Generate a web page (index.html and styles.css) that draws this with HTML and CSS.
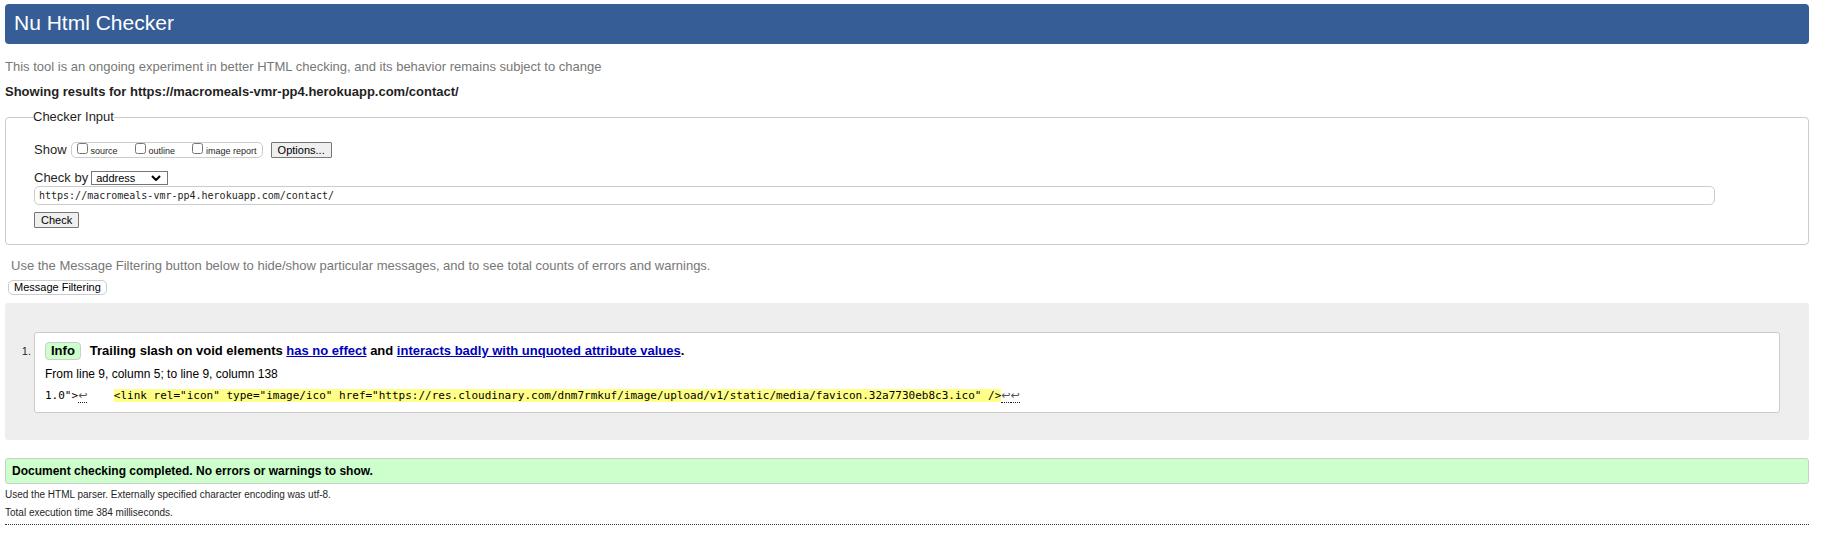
FILE: index.html
```html
<!DOCTYPE html>
<html lang="en">
<head>
<meta charset="utf-8">
<title>Nu Html Checker</title>
<link rel="stylesheet" href="styles.css">
</head>
<body>
<header class="banner"><h1>Nu Html Checker</h1></header>
<p class="note">This tool is an ongoing experiment in better HTML checking, and its behavior remains subject to change</p>
<h2 class="target">Showing results for https://macromeals-vmr-pp4.herokuapp.com/contact/</h2>
<form>
  <fieldset class="checker">
    <legend>Checker Input</legend>
    <div class="show-row">
      <span>Show</span>
      <div class="checks">
        <label><input type="checkbox">source</label>
        <label><input type="checkbox">outline</label>
        <label><input type="checkbox">image report</label>
      </div>
      <button type="button" class="btn options">Options...</button>
    </div>
    <div class="by-row">
      <label for="method">Check by</label>
      <div class="select-box">
        <select id="method"><option>address</option></select>
        <svg class="chevron" viewBox="0 0 10 6" aria-hidden="true"><path d="M1 1l4 4 4-4"/></svg>
      </div>
    </div>
    <input class="url" type="text" aria-label="Address" value="https://macromeals-vmr-pp4.herokuapp.com/contact/">
    <button type="button" class="btn">Check</button>
  </fieldset>
</form>
<p class="note hint">Use the Message Filtering button below to hide/show particular messages, and to see total counts of errors and warnings.</p>
<button type="button" class="filter">Message Filtering</button>
<ol class="results">
  <li>
    <p class="message"><strong class="badge">Info</strong><span>Trailing slash on void elements <a href="#effect">has no effect</a> and <a href="#unquoted">interacts badly with unquoted attribute values</a>.</span></p>
    <p class="location">From line 9, column 5; to line 9, column 138</p>
    <p class="extract"><code>1.0"&gt;<span class="lf">↩</span>    <mark>&lt;link rel="icon" type="image/ico" href="https://res.cloudinary.com/dnm7rmkuf/image/upload/v1/static/media/favicon.32a7730eb8c3.ico" /&gt;</mark><span class="lf">↩</span><span class="lf">↩</span></code></p>
  </li>
</ol>
<p class="success">Document checking completed. No errors or warnings to show.</p>
<p class="details">Used the HTML parser. Externally specified character encoding was utf-8.</p>
<p class="details">Total execution time 384 milliseconds.</p>
<hr>
</body>
</html>
```
FILE: styles.css
```css
* { box-sizing: border-box; }
body {
  margin: 4px 20px 0 5px;
  background: #fff;
  color: #1f1f1f;
  font: 13px/18px "Liberation Sans", Arial, sans-serif;
}
h1, h2, p { margin: 0; }
.banner {
  padding: 7px 9px 9px;
  border-radius: 4px;
  background: #365d95;
  color: #fff;
}
h1 { font-size: 21px; font-weight: 400; line-height: 24px; }
.note { margin-top: 14px; color: #777; }
.target { margin-top: 7px; font-size: 13px; line-height: 18px; }
.checker {
  margin: 7px 0 0;
  padding: 15px 93px 16px 28px;
  border: 1px solid #ccc;
  border-radius: 4px;
}
.checker legend { padding: 0; margin-left: -1px; }
.show-row, .by-row { display: flex; align-items: center; }
.show-row { gap: 4px; margin-bottom: 11px; }
.checks {
  display: flex;
  gap: 17px;
  height: 16px;
  padding: 0 5px;
  border: 1px solid #ccc;
  border-radius: 5px;
  font-size: 9px;
  line-height: 16px;
}
.checks label { display: flex; gap: 3px; }
.checks input { width: 11px; height: 11px; margin: 0; }
.btn {
  display: block;
  height: 16px;
  padding: 0 6px;
  border: 1px solid #767676;
  border-radius: 1px;
  background: #efefef;
  color: #000;
  font: 11px/14px "Liberation Sans", Arial, sans-serif;
}
.options { margin-left: 4px; }
.by-row { gap: 3px; line-height: 16px; }
.select-box { position: relative; width: 77px; height: 14px; }
.select-box select {
  display: block;
  width: 100%;
  height: 100%;
  padding: 0 4px;
  appearance: none;
  border: 1px solid #767676;
  border-radius: 0;
  background: #fff;
  color: #000;
  font: 11px/12px "Liberation Sans", Arial, sans-serif;
}
.chevron {
  position: absolute;
  top: 4px;
  right: 7px;
  width: 10px;
  height: 6px;
  fill: none;
  stroke: #000;
  stroke-width: 2;
  pointer-events: none;
}
.url {
  display: block;
  width: 100%;
  height: 19px;
  margin-bottom: 7px;
  padding: 0 4px;
  border: 1px solid #ccc;
  border-radius: 5px;
  color: #1f1f1f;
  font: 10px "DejaVu Sans Mono", monospace;
}
.hint { margin-left: 6px; margin-top: 12px; }
.filter {
  display: block;
  height: 15px;
  margin: 5px 0 8px 3px;
  padding: 0 5px;
  border: 1px solid #ccc;
  border-radius: 5px;
  background: #fff;
  color: #000;
  font: 11px/13px "Liberation Sans", Arial, sans-serif;
}
.results {
  margin: 0;
  padding: 29px 29px 27px;
  border-radius: 3px;
  background: #eee;
  font-size: 11px;
}
.results li {
  padding: 9px 10px 8px;
  border: 1px solid #ccc;
  border-radius: 3px;
  background: #fff;
}
.message { display: flex; align-items: center; gap: 9px; font-size: 13px; font-weight: 700; color: #000; }
.badge {
  padding: 0 5px;
  border: 1px solid #ccc;
  border-radius: 4px;
  background: #cfc;
  line-height: 16px;
}
.message a { color: #00b; }
.location { margin-top: 5px; font-size: 12px; color: #000; }
.extract { margin-top: 3px; line-height: 18px; white-space: pre-wrap; }
.extract code { font: 11px/14px "DejaVu Sans Mono", monospace; color: #000; }
.extract mark { background: #ff8; color: #000; }
.extract .lf { border-bottom: 1px dotted #222; color: #555; font-family: "DejaVu Sans", sans-serif; }
.success {
  margin-top: 18px;
  padding: 3px 6px;
  border: 1px solid #ccc;
  border-radius: 3px;
  background: #cfc;
  color: #000;
  font-size: 12px;
  font-weight: 700;
}
.details { margin-top: 3px; font-size: 10px; line-height: 15px; }
hr { margin: 4px 0 0; border: 0; border-top: 1px dotted #333; }
```
